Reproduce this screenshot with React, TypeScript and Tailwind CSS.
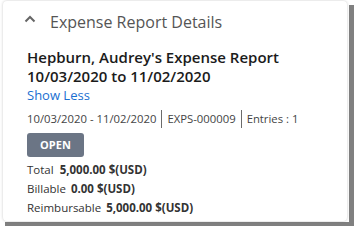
const font = { fontFamily: '"Open Sans", "Liberation Sans", sans-serif' };

function Meta({ children, last }: { children: React.ReactNode; last?: boolean }) {
    return (
        <span className={`px-[5px] leading-[18px] ${last ? '' : 'border-r border-[#6b6b6b]'}`}>{children}</span>
    );
}

export default function App() {
    return (
        <div className="w-[355px] h-[226px] overflow-hidden bg-white" style={font}>
            <div className="w-[349px] h-[222px] bg-white shadow-[5px_5px_0_#808080] pl-[3px] pr-[2px] pt-[1px] pb-[1px]">
                <div className="h-full rounded-[4px] bg-white shadow-[0_0_3px_rgba(0,0,0,0.22)]">
                    <div className="flex items-center h-[42px] pl-[21px]">
                        <svg width="12" height="8" viewBox="0 0 12 8" className="mr-[14px] mt-[-7px]">
                            <path d="M1.5 6.5 L6 2 L10.5 6.5" fill="none" stroke="#666" strokeWidth="2" />
                        </svg>
                        <span className="text-[16px] text-[#555]">Expense Report Details</span>
                    </div>
                    <div className="pl-[24px] pt-[5px]">
                        <div className="text-[15px] font-semibold leading-[19px] text-[#1b1b1b]">
                            Hepburn, Audrey's Expense Report
                            <br />
                            10/03/2020 to 11/02/2020
                        </div>
                        <div className="text-[13px] leading-[18px] text-[#1a6fd1]">Show Less</div>
                        <div className="flex items-center mt-[6px] ml-[-5px] text-[11.3px] text-[#444]">
                            <Meta>10/03/2020 - 11/02/2020</Meta>
                            <Meta>EXPS-000009</Meta>
                            <Meta last>Entries : 1</Meta>
                        </div>
                        <div className="mt-[5px] w-[57px] h-[24px] rounded-[3px] bg-[#6b7585] flex items-center justify-center text-[11px] font-bold text-white">
                            OPEN
                        </div>
                        <div className="mt-[3px] text-[11.5px] leading-[19px] text-[#333]">
                            <div>Total<span className="ml-[6px] font-bold">5,000.00 $(USD)</span></div>
                            <div>Billable<span className="ml-[5px] font-bold">0.00 $(USD)</span></div>
                            <div>Reimbursable<span className="ml-[5px] font-bold">5,000.00 $(USD)</span></div>
                        </div>
                    </div>
                </div>
            </div>
        </div>
    );
}
